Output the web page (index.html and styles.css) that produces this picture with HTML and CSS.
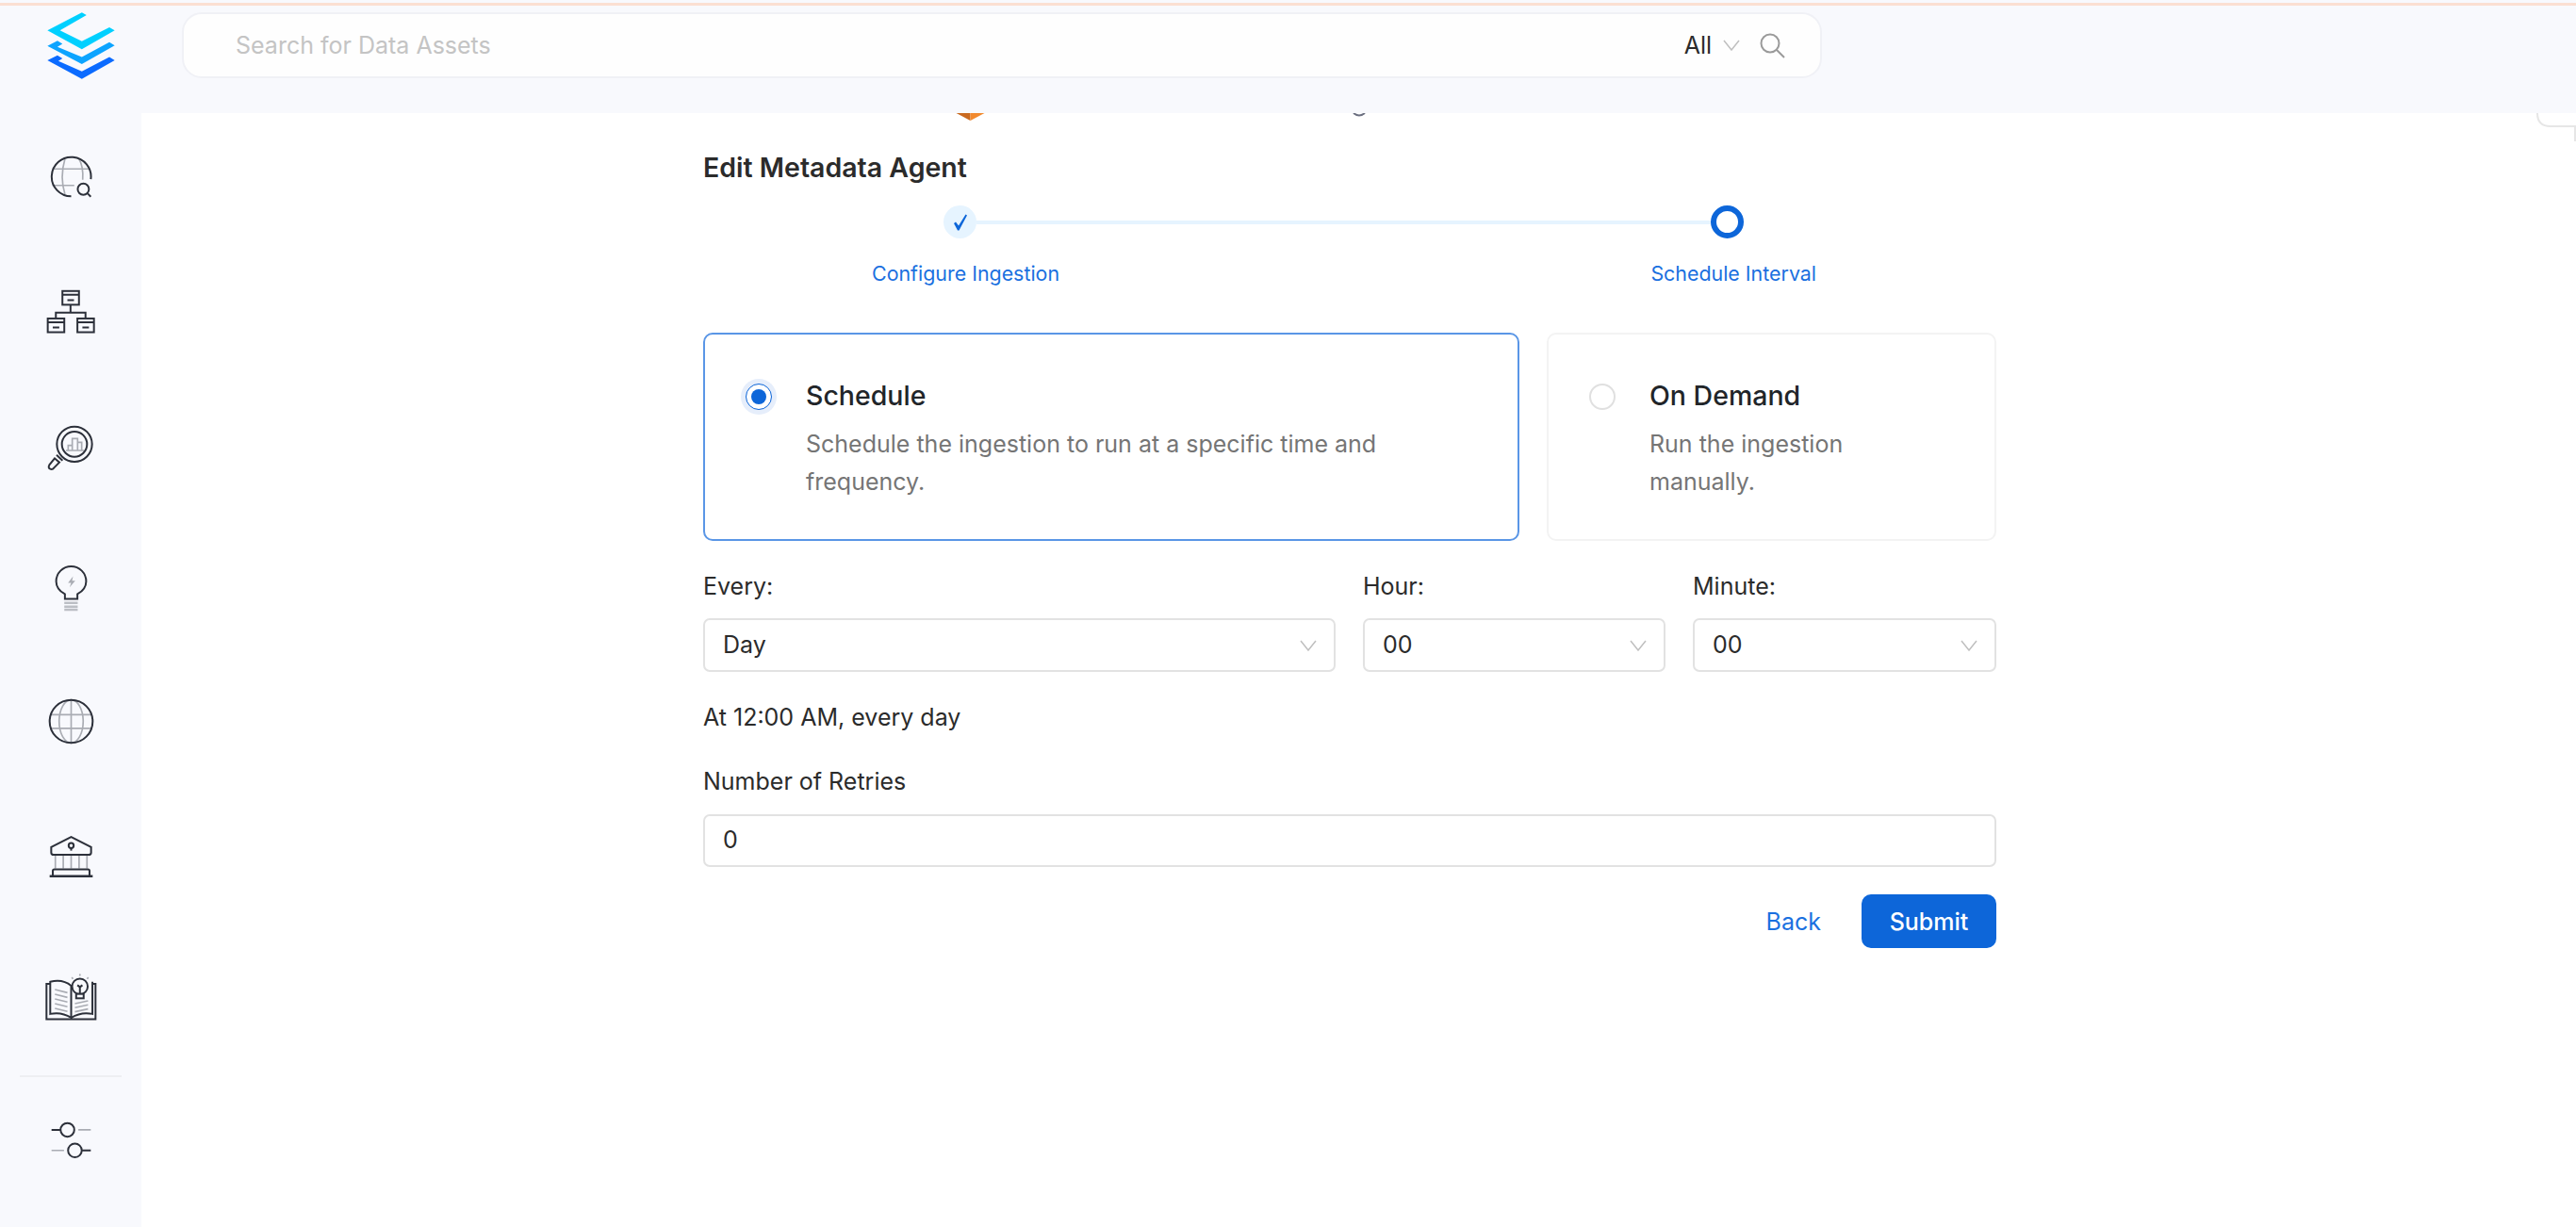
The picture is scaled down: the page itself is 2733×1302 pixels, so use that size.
FILE: index.html
```html
<!DOCTYPE html>
<html>

<head>
    <title>Edit Metadata Agent</title>
    <link rel="stylesheet" href="styles.css">
</head>

<body>
    <div class="top-line"></div>

    <header class="header">
        <svg class="logo" viewBox="60 39 215 214">
            <path fill="#00d0ff" d="M60 97 170 40 185 48 100 97 170 132 258 87 275 97 170 157Z" />
            <path fill="#0ca4ff" d="M60 147 92 130 108 140 92 150 170 182 258 135 275 145 170 205Z" />
            <path fill="#0b6bff" d="M60 193 92 177 108 187 95 195 170 228 258 182 275 193 170 252Z" />
        </svg>
        <div class="search">
            <span class="search-placeholder">Search for Data Assets</span>
            <span class="search-scope">All</span>
            <svg class="chevron search-chevron" viewBox="0 0 18 12">
                <path d="M1 1 9 11 17 1" />
            </svg>
            <svg class="search-icon" viewBox="0 0 27 27">
                <circle cx="11" cy="11" r="9.5" />
                <path d="M18 18 26 26" />
            </svg>
        </div>
    </header>

    <div class="layout">
        <nav class="sidebar">
            <svg class="nav-icon icon-explore" viewBox="157 494 136 136">
                <g class="soft">
                    <path d="M165 537H285M165 590H235M205 505Q188 562 205 618M250 505Q265 530 262 572" />
                </g>
                <g class="dark">
                    <path d="M288 570A63 63 0 1 0 225 625" />
                    <circle cx="264" cy="602" r="18" />
                    <path d="M278 616 288 626" />
                </g>
            </svg>
            <svg class="nav-icon icon-org" viewBox="147 921 157 141">
                <g class="dark">
                    <rect x="199" y="926" width="53" height="44" />
                    <rect x="152" y="1014" width="53" height="44" />
                    <rect x="247" y="1014" width="53" height="44" />
                    <path d="M225 970V995M178 1014V995H273V1014" />
                    <path d="M199 938H252M152 1026H205M247 1026H300" />
                    <path d="M215 955H236M168 1043H189M263 1043H284" />
                </g>
            </svg>
            <svg class="nav-icon icon-insights" viewBox="148 148 150 150">
                <g class="soft">
                    <path d="M208 232H266M215 232V216H228M228 232V194H245V232M245 206H258V232" />
                </g>
                <g class="dark">
                    <circle cx="235" cy="212" r="56" />
                    <circle cx="235" cy="212" r="40" />
                    <path d="M172 257 155 278Q150 288 158 291 165 294 170 287L187 270ZM178 246 197 264" />
                </g>
            </svg>
            <svg class="nav-icon icon-bulb" viewBox="170 596 110 154">
                <g class="soft">
                    <path class="soft-bar" d="M203 719H246M203 731H246M203 741H246" />
                    <path class="soft-fill" d="M231 634 215 655H225L220 669 238 648H228Z" />
                </g>
                <g class="dark">
                    <path d="M205 706V691Q177 675 177 650A48 48 0 1 1 273 650Q273 675 245 691V706Z" />
                </g>
            </svg>
            <svg class="nav-icon icon-globe" viewBox="152 1023 146 146">
                <g class="soft">
                    <ellipse cx="225" cy="1096" rx="38" ry="68" />
                    <path d="M225 1028V1164M160 1075H290M160 1118H290" />
                </g>
                <g class="dark">
                    <circle cx="225" cy="1096" r="68" />
                </g>
            </svg>
            <svg class="nav-icon icon-bank" viewBox="155 0 140 130">
                <g class="soft">
                    <path d="M175 62V102M200 62V102M225 62V102M250 62V102M275 62V102" />
                </g>
                <g class="dark">
                    <path d="M162 35 225 3 288 35V52Q288 59 280 59H170Q162 59 162 52Z" />
                    <circle cx="225" cy="30" r="8" />
                    <path d="M225 38V46" />
                    <path d="M167 126V110Q167 105 172 105H278Q283 105 283 110V126" />
                    <path class="thick" d="M157 127H293" />
                </g>
            </svg>
            <svg class="nav-icon icon-book" viewBox="136 396 172 156">
                <g class="soft">
                    <path d="M170 450 210 460M170 465 210 475M170 480 210 490M170 495 210 505M170 510 210 520" />
                    <path d="M234 495 276 486M234 508 276 499M234 521 276 512" />
                    <path d="M250 400V406M224 411 228 416M277 411 273 416" />
                </g>
                <g class="dark">
                    <path d="M155 432H143V545H300V432H290" />
                    <path d="M155 425Q195 415 222 438V540Q190 520 155 528Z" />
                    <path d="M222 540Q255 520 290 528V425" />
                    <circle class="bulb-fill" cx="250" cy="440" r="25" />
                    <rect class="bulb-fill" x="238" y="464" width="24" height="14" />
                    <path d="M250 464V440M242 436 250 442 258 436" />
                </g>
            </svg>
            <div class="sidebar-divider"></div>
            <svg class="nav-icon icon-settings" viewBox="158 870 134 118">
                <g class="soft">
                    <path d="M248 897H288M162 963H202" />
                </g>
                <g class="dark">
                    <path d="M162 897H190M260 963H288" />
                    <circle cx="213" cy="897" r="22" />
                    <circle cx="237" cy="963" r="22" />
                </g>
            </svg>
        </nav>

        <main class="content">
            <svg class="panel-corner" viewBox="0 0 42 30">
                <path d="M1 0Q1 14 15 14H41V30" />
            </svg>

            <div class="form">
                <div class="crumb">
                    <svg class="crumb-icon" viewBox="0 0 30 8">
                        <path fill="#c96a20" d="M0 0H15V8Z" />
                        <path fill="#f28a2e" d="M15 0H30L15 8Z" />
                    </svg>
                    <svg class="crumb-tail" viewBox="0 0 14 4">
                        <path d="M1 0Q7 5 13 0" />
                    </svg>
                </div>

                <h1 class="title">Edit Metadata Agent</h1>

                <div class="stepper">
                    <span class="step-dot step-done">
                        <svg viewBox="0 0 16 18">
                            <path d="M1 10 3 8.500 6 12.500 13.500 0.500 15 1.500 6.500 17.500H5Z" />
                        </svg>
                    </span>
                    <span class="step-line"></span>
                    <span class="step-dot step-active"></span>
                </div>
                <div class="step-labels">
                    <span>Configure Ingestion</span>
                    <span>Schedule Interval</span>
                </div>

                <div class="options">
                    <div class="option option-selected">
                        <span class="radio-slot"><span class="radio radio-on"></span></span>
                        <div class="option-text">
                            <div class="option-title">Schedule</div>
                            <div class="option-desc">Schedule the ingestion to run at a specific time and frequency.
                            </div>
                        </div>
                    </div>
                    <div class="option option-plain">
                        <span class="radio-slot"><span class="radio"></span></span>
                        <div class="option-text">
                            <div class="option-title">On Demand</div>
                            <div class="option-desc">Run the ingestion manually.</div>
                        </div>
                    </div>
                </div>

                <div class="time-row">
                    <div class="field">
                        <label class="label">Every:</label>
                        <div class="select">
                            <span>Day</span>
                            <svg class="chevron" viewBox="0 0 18 12">
                                <path d="M1 1 9 11 17 1" />
                            </svg>
                        </div>
                    </div>
                    <div class="field">
                        <label class="label">Hour:</label>
                        <div class="select">
                            <span>00</span>
                            <svg class="chevron" viewBox="0 0 18 12">
                                <path d="M1 1 9 11 17 1" />
                            </svg>
                        </div>
                    </div>
                    <div class="field">
                        <label class="label">Minute:</label>
                        <div class="select">
                            <span>00</span>
                            <svg class="chevron" viewBox="0 0 18 12">
                                <path d="M1 1 9 11 17 1" />
                            </svg>
                        </div>
                    </div>
                </div>

                <p class="summary">At 12:00 AM, every day</p>

                <label class="label retries-label" for="retries">Number of Retries</label>
                <input class="retries-input" id="retries" type="text" value="0">

                <div class="actions">
                    <button class="btn-back" type="button">Back</button>
                    <button class="btn-submit" type="button">Submit</button>
                </div>
            </div>
        </main>
    </div>
</body>

</html>
```

FILE: styles.css
```css
* {
    box-sizing: border-box;
}

html,
body {
    height: 100%;
}

body {
    margin: 0;
    background-color: #f8f9fd;
    color: #2b2b2b;
    font-family: Inter, "Noto Sans", sans-serif;
    font-size: 25px;
    overflow: hidden;
}

.top-line {
    height: 3px;
    margin-top: 3px;
    background-color: #fbdfd2;
}

/* header */
.header {
    display: flex;
    height: 114px;
    padding: 7px 0 0 50px;
}

.logo {
    width: 72px;
    height: 71px;
    margin-right: 71px;
}

.search {
    display: flex;
    align-items: center;
    width: 1740px;
    height: 70px;
    padding: 0 37px 0 55px;
    background-color: #fefefe;
    border: 2px solid #f0f1f6;
    border-radius: 21px;
}

.search-placeholder {
    flex: 1;
    color: #c4c4c4;
}

.search-scope {
    color: #2b2b2b;
}

.search-chevron {
    margin: 0 21px 0 12px;
}

.search-icon {
    width: 27px;
    height: 27px;
    fill: none;
    stroke: #9a9a9a;
    stroke-width: 2;
}

.chevron {
    flex: none;
    width: 18px;
    height: 12px;
    fill: none;
    stroke: #bfbfbf;
    stroke-width: 1.5;
}

/* sidebar */
.layout {
    display: flex;
    height: 1182px;
}

.sidebar {
    display: flex;
    flex-direction: column;
    align-items: center;
    flex: none;
    width: 150px;
}

.nav-icon {
    flex: none;
    fill: none;
}

.nav-icon .dark {
    stroke: #2c303a;
    stroke-width: 6;
}

.nav-icon .soft {
    stroke: #a9acb3;
    stroke-width: 5;
}

.nav-icon .soft-bar {
    stroke: #bcbfc5;
    stroke-width: 8;
}

.nav-icon .soft-fill {
    fill: #a9acb3;
    stroke: none;
}

.nav-icon .thick {
    stroke-width: 8;
}

.nav-icon .bulb-fill {
    fill: #f8f9fd;
}

.icon-explore {
    width: 45px;
    height: 45px;
    margin-top: 45px;
}

.icon-org {
    width: 52px;
    height: 47px;
    margin-top: 97px;
}

.icon-insights {
    width: 50px;
    height: 50px;
    margin-top: 96px;
}

.icon-bulb {
    width: 37px;
    height: 51px;
    margin-top: 99px;
}

.icon-globe {
    width: 49px;
    height: 49px;
    margin-top: 91px;
}

.icon-bank {
    width: 47px;
    height: 44px;
    margin-top: 97px;
}

.icon-book {
    width: 57px;
    height: 52px;
    margin-top: 101px;
}

.sidebar-divider {
    flex: none;
    width: 108px;
    height: 2px;
    margin-top: 57px;
    background-color: #eeeff2;
}

.icon-settings {
    width: 45px;
    height: 39px;
    margin-top: 47px;
}

/* content */
.content {
    position: relative;
    flex: 1;
    padding-left: 596px;
    background-color: #fff;
}

.panel-corner {
    position: absolute;
    top: 0;
    right: 0;
    width: 42px;
    height: 30px;
    fill: none;
    stroke: #e6e6e6;
    stroke-width: 2;
}

.form {
    width: 1372px;
}

.crumb {
    display: flex;
    height: 8px;
    padding-left: 268px;
}

.crumb-icon {
    width: 31px;
    height: 8px;
}

.crumb-tail {
    width: 14px;
    height: 4px;
    margin-left: 390px;
    fill: none;
    stroke: #6b6f80;
    stroke-width: 2;
}

.title {
    margin: 30px 0 0;
    font-size: 28.5px;
    font-weight: 600;
    line-height: 40px;
}

/* stepper */
.stepper {
    display: flex;
    align-items: center;
    width: 849px;
    margin: 20px 0 0 255px;
}

.step-dot {
    display: flex;
    align-items: center;
    justify-content: center;
    flex: none;
    width: 35px;
    height: 35px;
    border-radius: 50%;
}

.step-done {
    background-color: #e6f4ff;
}

.step-done svg {
    width: 16px;
    height: 18px;
    fill: #0d66d9;
}

.step-active {
    border: 6px solid #0d66d9;
}

.step-line {
    flex: 1;
    height: 4px;
    background-color: #e6f4ff;
}

.step-labels {
    display: flex;
    justify-content: space-between;
    width: 1002px;
    margin: 22px 0 0 179px;
    color: #1a70e0;
    font-size: 21.4px;
    line-height: 30px;
}

/* schedule options */
.options {
    display: flex;
    gap: 29px;
    margin-top: 48px;
}

.option {
    display: flex;
    align-items: flex-start;
    gap: 31px;
    height: 221px;
    padding: 47px 107px 0 38px;
    border-radius: 10px;
}

.option-selected {
    width: 866px;
    border: 2px solid #5a96e6;
}

.option-plain {
    width: 477px;
    border: 2px solid #f3f3f3;
}

.radio-slot {
    display: flex;
    align-items: center;
    justify-content: center;
    flex: none;
    width: 38px;
    height: 38px;
}

.radio {
    width: 28px;
    height: 28px;
    background-color: #fff;
    border: 2px solid #e0e0e0;
    border-radius: 50%;
}

.radio-on {
    padding: 5px;
    background-color: #0d66d9;
    background-clip: content-box;
    border: 1.5px solid #0d66d9;
    box-shadow: 0 0 0 5px #e6eefb;
}

.option-title {
    color: #212529;
    font-size: 28.5px;
    font-weight: 500;
    line-height: 36px;
}

.option-desc {
    margin-top: 13px;
    color: #757575;
    line-height: 40px;
}

/* time fields */
.time-row {
    display: flex;
    gap: 29px;
    margin-top: 31px;
}

.field {
    width: 321px;
}

.field:first-child {
    width: 671px;
}

.field:last-child {
    width: 322px;
}

.label {
    display: block;
    line-height: 34px;
}

.select {
    display: flex;
    align-items: center;
    justify-content: space-between;
    height: 57px;
    margin-top: 17px;
    padding: 0 18px 0 19px;
    border: 2px solid #e2e2e2;
    border-radius: 7px;
}

.select span {
    margin-bottom: 2px;
}

.summary {
    margin: 31px 0 0;
    line-height: 34px;
}

.retries-label {
    margin-top: 34px;
}

.retries-input {
    display: block;
    width: 100%;
    height: 56px;
    margin-top: 18px;
    padding: 0 0 2px 19px;
    color: #2b2b2b;
    font-family: inherit;
    font-size: inherit;
    border: 2px solid #e2e2e2;
    border-radius: 7px;
}

.actions {
    display: flex;
    justify-content: flex-end;
    align-items: center;
    gap: 43px;
    margin-top: 29px;
}

.btn-back,
.btn-submit {
    padding: 0;
    font-family: inherit;
    font-size: inherit;
    font-weight: 500;
    border: none;
}

.btn-back {
    background: none;
    color: #1a70e0;
    font-weight: 400;
}

.btn-submit {
    width: 143px;
    height: 57px;
    background-color: #0d66d9;
    color: #fff;
    border-radius: 10px;
}
```
